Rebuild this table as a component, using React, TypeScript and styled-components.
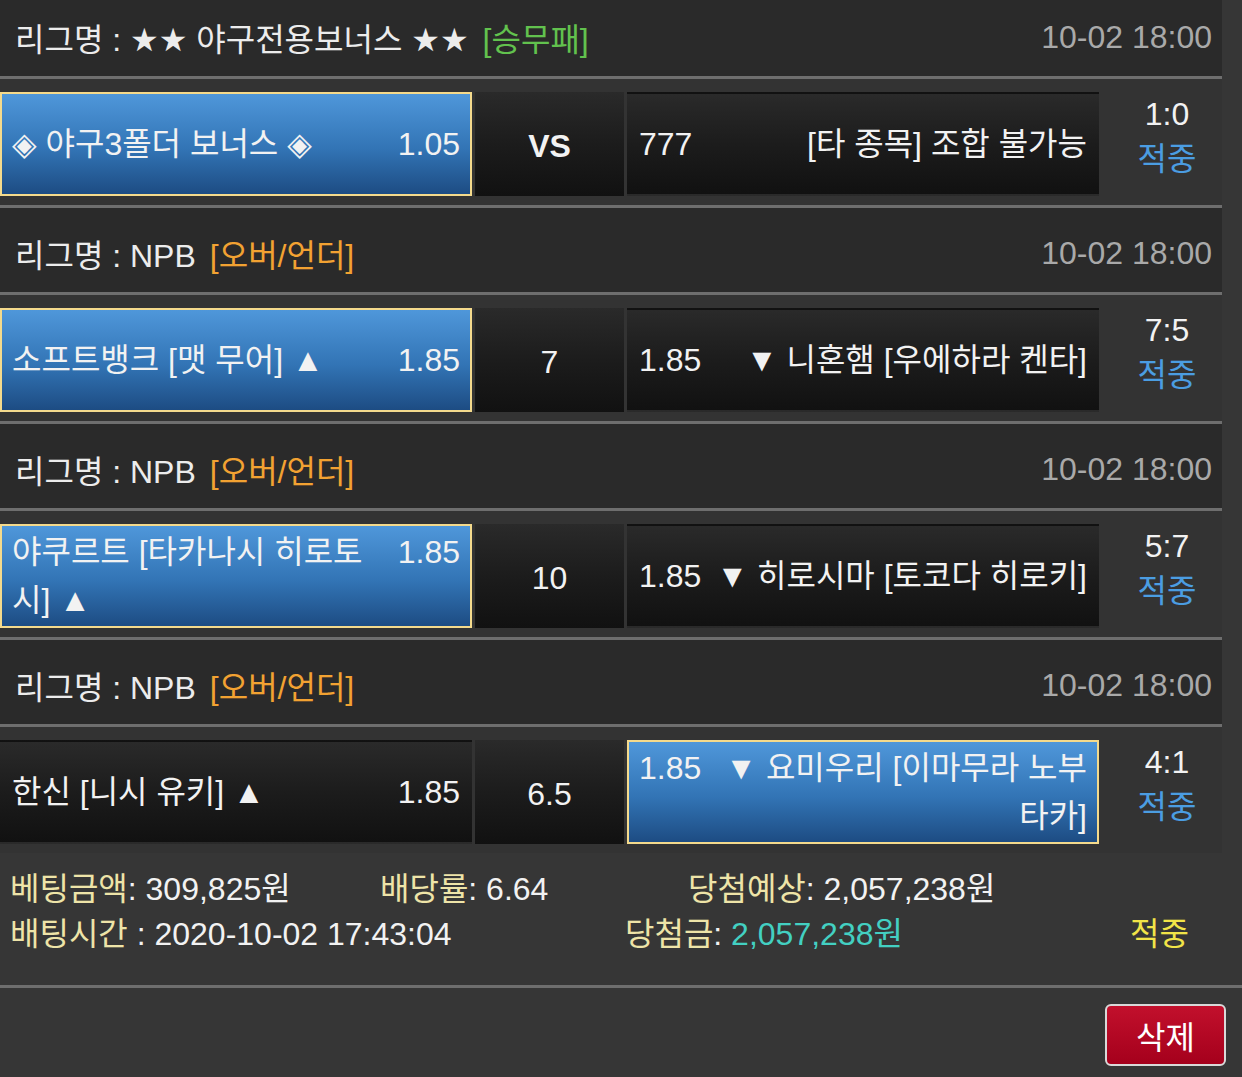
import React from "react";
import styled, { createGlobalStyle } from "styled-components";

const GlobalStyle = createGlobalStyle`
  html, body {
    margin: 0;
    padding: 0;
    background: #363636;
  }
  body {
    width: 1242px;
    height: 1077px;
    overflow: hidden;
    font-family: "Liberation Sans", "DejaVu Sans", "Noto Sans CJK KR", sans-serif;
    font-size: 32px;
    color: #f2f2f2;
  }
`;

type Pick = "home" | "away";

type Game = {
  league: string;
  tag: string;
  tagColor: string;
  time: string;
  home: string;
  homeOdds: string;
  middle: string;
  middleBold?: boolean;
  awayOdds: string;
  away: string;
  score: string;
  pick: Pick;
};

const games: Game[] = [
  {
    league: "리그명 : ★★ 야구전용보너스 ★★",
    tag: "[승무패]",
    tagColor: "#62c24e",
    time: "10-02 18:00",
    home: "◈ 야구3폴더 보너스 ◈",
    homeOdds: "1.05",
    middle: "VS",
    middleBold: true,
    awayOdds: "777",
    away: "[타 종목] 조합 불가능",
    score: "1:0",
    pick: "home",
  },
  {
    league: "리그명 : NPB",
    tag: "[오버/언더]",
    tagColor: "#f2a232",
    time: "10-02 18:00",
    home: "소프트뱅크 [맷 무어] ▲",
    homeOdds: "1.85",
    middle: "7",
    awayOdds: "1.85",
    away: "▼ 니혼햄 [우에하라 켄타]",
    score: "7:5",
    pick: "home",
  },
  {
    league: "리그명 : NPB",
    tag: "[오버/언더]",
    tagColor: "#f2a232",
    time: "10-02 18:00",
    home: "야쿠르트 [타카나시 히로토시] ▲",
    homeOdds: "1.85",
    middle: "10",
    awayOdds: "1.85",
    away: "▼ 히로시마 [토코다 히로키]",
    score: "5:7",
    pick: "home",
  },
  {
    league: "리그명 : NPB",
    tag: "[오버/언더]",
    tagColor: "#f2a232",
    time: "10-02 18:00",
    home: "한신 [니시 유키] ▲",
    homeOdds: "1.85",
    middle: "6.5",
    awayOdds: "1.85",
    away: "▼ 요미우리 [이마무라 노부타카]",
    score: "4:1",
    pick: "away",
  },
];

const Page = styled.div`
  width: 1242px;
  margin-top: -8px;
`;

const GameList = styled.div`
  width: 1222px;
`;

const LeagueHeader = styled.div`
  height: 78px;
  padding: 6px 10px 0 15px;
  display: flex;
  align-items: center;
  justify-content: space-between;
  background: #2a2a2a;
  border-bottom: 3px solid #6e6e6e;
`;

const LeagueName = styled.div`
  color: #ececec;
  white-space: nowrap;
`;

const LeagueTag = styled.span<{ $color: string }>`
  margin-left: 14px;
  color: ${(p) => p.$color};
`;

const GameTime = styled.div`
  color: #a9a9a9;
`;

const BetRow = styled.div<{ $last?: boolean }>`
  display: grid;
  grid-template-columns: 472px 149px 472px 1fr;
  column-gap: 3px;
  padding: 13px 0 9px;
  background: #333333;
  border-bottom: ${(p) => (p.$last ? "none" : "3px solid #6e6e6e")};
`;

const Cell = styled.div<{ $picked?: boolean }>`
  height: 104px;
  box-sizing: border-box;
  display: flex;
  align-items: center;
  padding: 0 10px;
  border: 2px solid ${(p) => (p.$picked ? "#f4da8c" : "transparent")};
  background: ${(p) =>
    p.$picked
      ? "linear-gradient(#4f97da, #3274b5 55%, #1d4c83)"
      : "linear-gradient(#2a2a2a, #1c1c1c 50%, #111111)"};
  line-height: 48px;
`;

const CellText = styled.div<{ $align: "left" | "right" }>`
  width: 100%;
  text-align: ${(p) => p.$align};
`;

const Odds = styled.span<{ $side: "left" | "right" }>`
  float: ${(p) => p.$side};
  margin-${(p) => (p.$side === "left" ? "right" : "left")}: 14px;
`;

const MiddleCell = styled.div<{ $bold?: boolean }>`
  height: 104px;
  display: flex;
  align-items: center;
  justify-content: center;
  padding-top: 4px;
  box-sizing: border-box;
  background: linear-gradient(#2a2a2a, #1c1c1c 50%, #111111);
  font-weight: ${(p) => (p.$bold ? 700 : 400)};
`;

const ScoreCol = styled.div`
  display: flex;
  flex-direction: column;
  align-items: center;
  padding-left: 10px;
  line-height: 45px;
`;

const Hit = styled.span<{ $color: string }>`
  color: ${(p) => p.$color};
`;

const Summary = styled.div`
  padding: 14px 0 28px 10px;
  line-height: 45px;
  border-bottom: 3px solid #6e6e6e;
`;

const SummaryLine = styled.div<{ $cols: string }>`
  display: grid;
  grid-template-columns: ${(p) => p.$cols};
  white-space: nowrap;
`;

const Label = styled.span`
  color: #eee4a8;
`;

const Value = styled.span<{ $color?: string }>`
  color: ${(p) => p.$color || "#f4f4f4"};
`;

const Actions = styled.div`
  display: flex;
  justify-content: flex-end;
  padding: 16px 16px 0 0;
`;

const DeleteButton = styled.button`
  width: 121px;
  height: 62px;
  border: 2px solid #d9d9d9;
  border-radius: 6px;
  background: linear-gradient(#c2102c, #a5001c);
  color: #ffffff;
  font-family: inherit;
  font-size: 32px;
  padding: 0;
`;

const App = () => {
  return (
    <Page>
      <GlobalStyle />
      <GameList>
        {games.map((g, i) => (
          <React.Fragment key={i}>
            <LeagueHeader>
              <LeagueName>
                {g.league}
                <LeagueTag $color={g.tagColor}>{g.tag}</LeagueTag>
              </LeagueName>
              <GameTime>{g.time}</GameTime>
            </LeagueHeader>
            <BetRow $last={i === games.length - 1}>
              <Cell $picked={g.pick === "home"}>
                <CellText $align="left">
                  <Odds $side="right">{g.homeOdds}</Odds>
                  {g.home}
                </CellText>
              </Cell>
              <MiddleCell $bold={g.middleBold}>{g.middle}</MiddleCell>
              <Cell $picked={g.pick === "away"}>
                <CellText $align="right">
                  <Odds $side="left">{g.awayOdds}</Odds>
                  {g.away}
                </CellText>
              </Cell>
              <ScoreCol>
                <span>{g.score}</span>
                <Hit $color="#4b9de2">적중</Hit>
              </ScoreCol>
            </BetRow>
          </React.Fragment>
        ))}
      </GameList>
      <Summary>
        <SummaryLine $cols="370px 308px auto">
          <span>
            <Label>베팅금액</Label>: 309,825원
          </span>
          <span>
            <Label>배당률</Label>: 6.64
          </span>
          <span>
            <Label>당첨예상</Label>: 2,057,238원
          </span>
        </SummaryLine>
        <SummaryLine $cols="615px 505px auto">
          <span>
            <Label>배팅시간</Label> : 2020-10-02 17:43:04
          </span>
          <span>
            <Label>당첨금</Label>: <Value $color="#43d0c2">2,057,238원</Value>
          </span>
          <Hit $color="#f1e448">적중</Hit>
        </SummaryLine>
      </Summary>
      <Actions>
        <DeleteButton>삭제</DeleteButton>
      </Actions>
    </Page>
  );
};

export default App;
